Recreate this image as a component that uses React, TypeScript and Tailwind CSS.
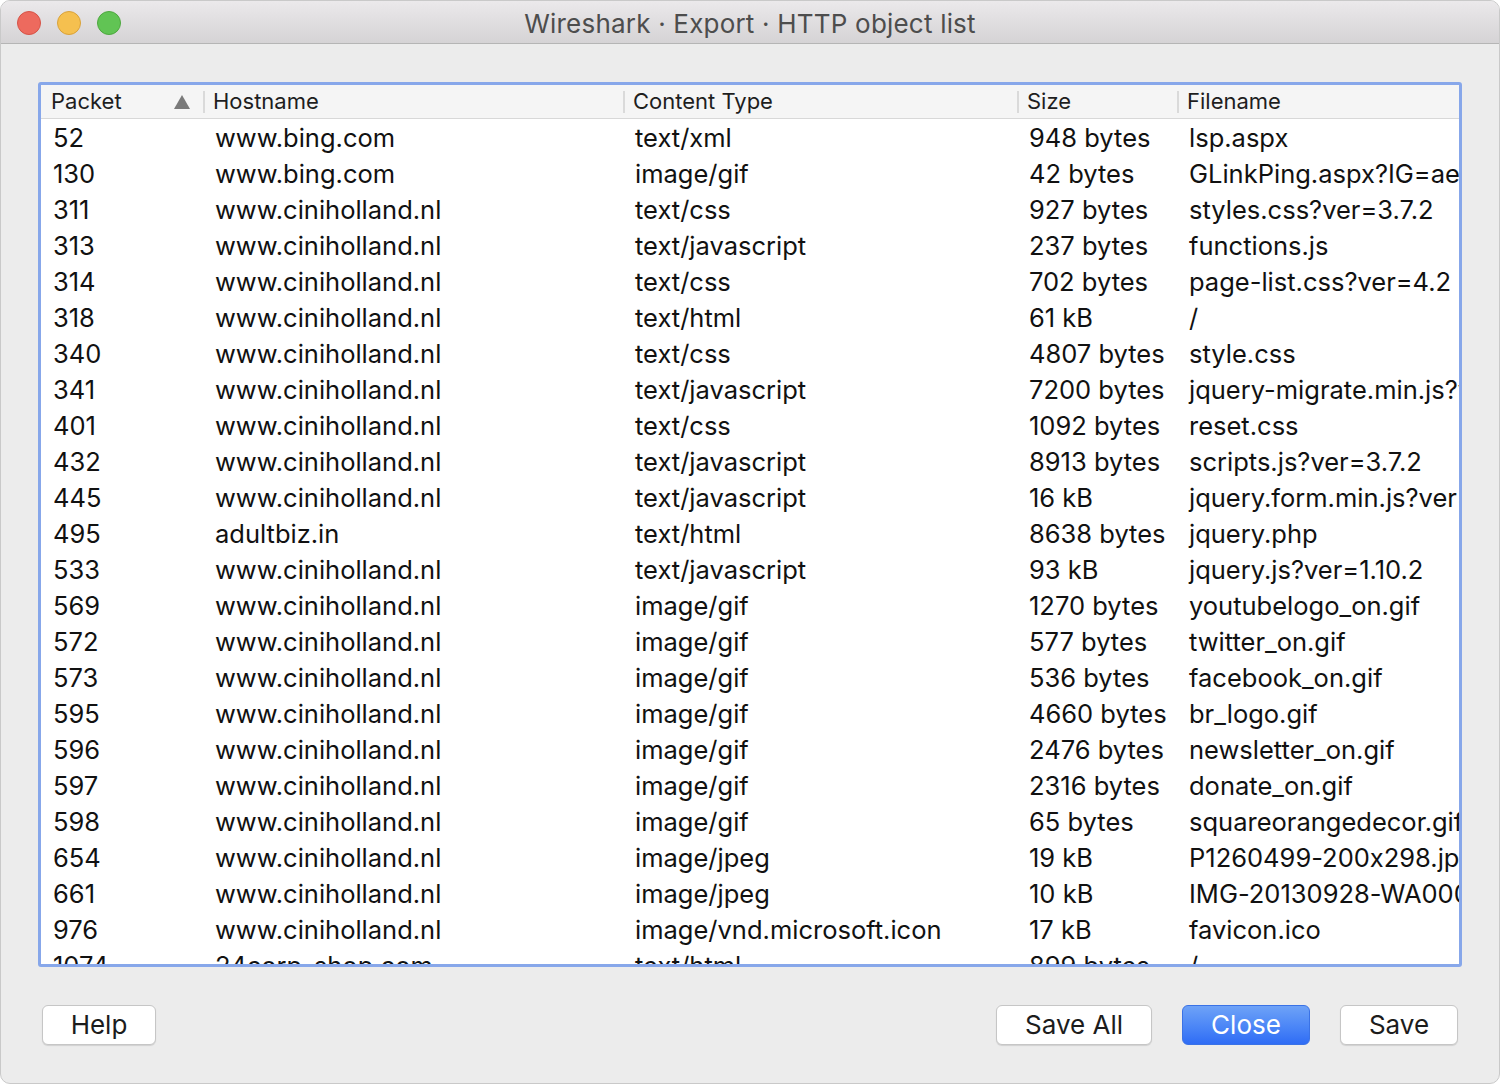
import { ReactNode } from "react";

type Row = [string, string, string, string, string];

const rows: Row[] = [
  ["52", "www.bing.com", "text/xml", "948 bytes", "lsp.aspx"],
  ["130", "www.bing.com", "image/gif", "42 bytes", "GLinkPing.aspx?IG=ae"],
  ["311", "www.ciniholland.nl", "text/css", "927 bytes", "styles.css?ver=3.7.2"],
  ["313", "www.ciniholland.nl", "text/javascript", "237 bytes", "functions.js"],
  ["314", "www.ciniholland.nl", "text/css", "702 bytes", "page-list.css?ver=4.2"],
  ["318", "www.ciniholland.nl", "text/html", "61 kB", "/"],
  ["340", "www.ciniholland.nl", "text/css", "4807 bytes", "style.css"],
  ["341", "www.ciniholland.nl", "text/javascript", "7200 bytes", "jquery-migrate.min.js?ver"],
  ["401", "www.ciniholland.nl", "text/css", "1092 bytes", "reset.css"],
  ["432", "www.ciniholland.nl", "text/javascript", "8913 bytes", "scripts.js?ver=3.7.2"],
  ["445", "www.ciniholland.nl", "text/javascript", "16 kB", "jquery.form.min.js?ver=3.4"],
  ["495", "adultbiz.in", "text/html", "8638 bytes", "jquery.php"],
  ["533", "www.ciniholland.nl", "text/javascript", "93 kB", "jquery.js?ver=1.10.2"],
  ["569", "www.ciniholland.nl", "image/gif", "1270 bytes", "youtubelogo_on.gif"],
  ["572", "www.ciniholland.nl", "image/gif", "577 bytes", "twitter_on.gif"],
  ["573", "www.ciniholland.nl", "image/gif", "536 bytes", "facebook_on.gif"],
  ["595", "www.ciniholland.nl", "image/gif", "4660 bytes", "br_logo.gif"],
  ["596", "www.ciniholland.nl", "image/gif", "2476 bytes", "newsletter_on.gif"],
  ["597", "www.ciniholland.nl", "image/gif", "2316 bytes", "donate_on.gif"],
  ["598", "www.ciniholland.nl", "image/gif", "65 bytes", "squareorangedecor.gif"],
  ["654", "www.ciniholland.nl", "image/jpeg", "19 kB", "P1260499-200x298.jpg"],
  ["661", "www.ciniholland.nl", "image/jpeg", "10 kB", "IMG-20130928-WA0000.jpg"],
  ["976", "www.ciniholland.nl", "image/vnd.microsoft.icon", "17 kB", "favicon.ico"],
  ["1074", "24corp-shop.com", "text/html", "899 bytes", "/"],
];

const widths = ["w-[162px]", "w-[420px]", "w-[394px]", "w-[160px]", "flex-1"];

function HeaderCell({ i, children }: { i: number; children: ReactNode }) {
  return (
    <div className={`${widths[i]} shrink-0 flex items-center h-full`}>
      {i > 0 && <div className="w-[2px] h-[22px] bg-[#dadada]" />}
      <div className="flex-1 flex items-center pl-[8px] pr-[10px] min-w-0">{children}</div>
    </div>
  );
}

function Button({ label, primary, width }: { label: string; primary?: boolean; width: string }) {
  return (
    <button
      className={`${width} h-[40px] rounded-[6px] text-[26px] leading-none ${
        primary
          ? "bg-gradient-to-b from-[#6ea2f7] to-[#2f6cf5] text-white border border-[#3a72e6]"
          : "bg-white text-[#1c1c1c] border border-[#c6c6c6] shadow-[0_1px_1px_rgba(0,0,0,0.12)]"
      }`}
    >
      {label}
    </button>
  );
}

export default function App() {
  return (
    <div
      className="w-[1500px] h-[1084px] bg-[#ececec] flex flex-col rounded-[10px] overflow-hidden border border-[#c9c9c9] [font-feature-settings:'calt'_0]"
      style={{ fontFamily: "Inter, 'Noto Sans', sans-serif" }}
    >
      <div className="h-[43px] shrink-0 relative flex items-center justify-center bg-gradient-to-b from-[#ebe9eb] to-[#d5d3d5] border-b border-[#b5b5b5]">
        <div className="absolute left-[16px] top-[10px] flex gap-[16px]">
          <div className="w-[24px] h-[24px] rounded-full bg-[#ed6a5e] border border-[#d65347]" />
          <div className="w-[24px] h-[24px] rounded-full bg-[#f5c04f] border border-[#d9a23a]" />
          <div className="w-[24px] h-[24px] rounded-full bg-[#61c454] border border-[#4ea83f]" />
        </div>
        <span className="text-[26px] text-[#4d4d4d] tracking-[0.2px] pt-[3px]">
          Wireshark · Export · HTTP object list
        </span>
      </div>

      <div className="flex-1 flex flex-col px-[37px] pt-[38px]">
        <div className="h-[885px] border-[3px] border-[#87a7ea] rounded-[3px] bg-white overflow-hidden flex flex-col">
          <div className="h-[34px] shrink-0 flex bg-[#f5f5f5] border-b border-[#d8d8d8] text-[22px] text-[#1e1e1e]">
            <HeaderCell i={0}>
              <span className="pl-[2px]">Packet</span>
              <svg className="ml-auto mr-[3px]" width="16" height="14" viewBox="0 0 16 14">
                <polygon points="8,0 16,14 0,14" fill="#7a7a7a" />
              </svg>
            </HeaderCell>
            <HeaderCell i={1}>Hostname</HeaderCell>
            <HeaderCell i={2}>Content Type</HeaderCell>
            <HeaderCell i={3}>Size</HeaderCell>
            <HeaderCell i={4}>Filename</HeaderCell>
          </div>
          <div className="flex-1 overflow-hidden text-[25.5px] text-[#111] pt-[1px]">
            {rows.map((r) => (
              <div key={r[0]} className="h-[36px] flex items-center">
                {r.map((c, i) => (
                  <div
                    key={i}
                    className={`${widths[i]} shrink-0 pl-[12px] whitespace-nowrap overflow-hidden ${i === 4 ? "min-w-0" : ""}`}
                  >
                    {c}
                  </div>
                ))}
              </div>
            ))}
          </div>
        </div>

        <div className="flex items-center mt-[38px] px-[4px]">
          <Button label="Help" width="w-[114px]" />
          <div className="flex-1" />
          <Button label="Save All" width="w-[156px]" />
          <div className="w-[30px]" />
          <Button label="Close" primary width="w-[128px]" />
          <div className="w-[30px]" />
          <Button label="Save" width="w-[118px]" />
        </div>
      </div>
    </div>
  );
}
